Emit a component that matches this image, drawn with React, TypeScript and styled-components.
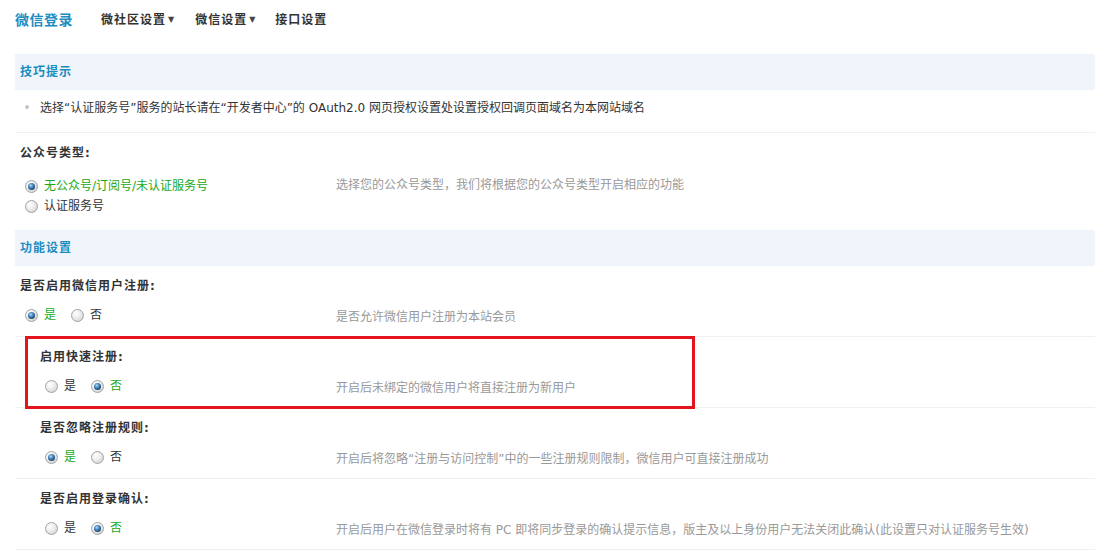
import styled, { createGlobalStyle } from "styled-components";

const GlobalStyle = createGlobalStyle`
  html, body {
    margin: 0;
    padding: 0;
    background: #fff;
  }
  body {
    font-family: "DejaVu Sans", "Noto Sans CJK SC", sans-serif;
    font-size: 12px;
    line-height: 16px;
    color: #333;
  }
`;

const Page = styled.div`
  width: 1095px;
  padding-left: 15px;
  box-sizing: border-box;
`;

const Header = styled.div`
  display: flex;
  align-items: center;
  height: 40px;
  margin-bottom: 14px;
`;

const PageTitle = styled.h3`
  margin: 0 28px 0 0;
  font-size: 14px;
  font-weight: 700;
  letter-spacing: 0.5px;
  line-height: 20px;
  color: #1b8dc1;
`;

const NavItem = styled.a<{ $gap: number }>`
  display: flex;
  align-items: center;
  margin-right: ${({ $gap }) => $gap}px;
  font-weight: 700;
  letter-spacing: 1px;
  color: #333;
  text-decoration: none;
`;

const Caret = styled.span`
  font-size: 8px;
  margin-left: 2px;
  letter-spacing: 0;
  color: #444;
`;

const SectionBar = styled.div`
  height: 36px;
  line-height: 36px;
  padding-left: 5px;
  background: #f0f5fb;
  color: #1a8cc0;
  font-weight: 700;
  letter-spacing: 1px;
`;

const TipRow = styled.div`
  display: flex;
  align-items: flex-start;
  box-sizing: border-box;
  height: 43px;
  padding: 10px 0 0 10px;
  border-bottom: 1px solid #eef1f4;
`;

const Bullet = styled.span`
  width: 4px;
  height: 4px;
  margin: 5px 11px 0 0;
  border-radius: 50%;
  background: #c4c4c4;
`;

const Block = styled.div<{ $last?: boolean }>`
  position: relative;
  border-bottom: ${({ $last }) => ($last ? "none" : "1px solid #eef1f4")};
`;

const TitleRow = styled.div<{ $indent: number }>`
  box-sizing: border-box;
  height: 34px;
  padding: 12px 0 0 ${({ $indent }) => 5 + $indent}px;
  font-weight: 700;
  letter-spacing: 1px;
  color: #333;
`;

const OptionRow = styled.div<{ $height: number }>`
  display: grid;
  grid-template-columns: 321px 1fr;
  height: ${({ $height }) => $height}px;
`;

const RadioGroup = styled.div<{ $indent: number; $stack?: boolean }>`
  display: flex;
  flex-direction: ${({ $stack }) => ($stack ? "column" : "row")};
  align-items: flex-start;
  padding: ${({ $stack }) => ($stack ? 9 : 7)}px 0 0
    ${({ $indent }) => 10 + $indent}px;
`;

const Option = styled.label<{ $checked?: boolean; $stack?: boolean }>`
  display: flex;
  align-items: center;
  gap: 6px;
  height: ${({ $stack }) => ($stack ? 20 : 16)}px;
  margin-right: 15px;
  color: ${({ $checked }) => ($checked ? "#1aa81a" : "#333")};
`;

const RadioMark = styled.span<{ $checked?: boolean }>`
  display: inline-flex;
  align-items: center;
  justify-content: center;
  width: 13px;
  height: 13px;
  box-sizing: border-box;
  border-radius: 50%;
  border: 1px solid #a3a3a3;
  background: radial-gradient(
    circle at 35% 30%,
    #ffffff 0,
    #ececec 45%,
    #c9c9c9 100%
  );

  &::after {
    content: "";
    display: ${({ $checked }) => ($checked ? "block" : "none")};
    width: 7px;
    height: 7px;
    border-radius: 50%;
    background: radial-gradient(
      circle at 40% 35%,
      #b4dcf7 0,
      #3d80ba 40%,
      #0f3657 85%
    );
  }
`;

const Desc = styled.div<{ $top: number }>`
  padding-top: ${({ $top }) => $top}px;
  color: #999;
`;

const Highlight = styled.div`
  position: absolute;
  top: -1px;
  left: 10px;
  width: 670px;
  height: 73px;
  box-sizing: border-box;
  border: 3px solid #e3141b;
  pointer-events: none;
`;

type Choice = { label: string; checked?: boolean };

interface SettingProps {
  title: string;
  choices: Choice[];
  desc: string;
  indent?: number;
  stack?: boolean;
  last?: boolean;
  highlight?: boolean;
}

const Setting = ({
  title,
  choices,
  desc,
  indent = 0,
  stack,
  last,
  highlight,
}: SettingProps) => (
  <Block $last={last}>
    <TitleRow $indent={indent}>{title}</TitleRow>
    <OptionRow $height={stack ? 63 : 36}>
      <RadioGroup $indent={indent} $stack={stack}>
        {choices.map((c) => (
          <Option key={c.label} $checked={c.checked} $stack={stack}>
            <RadioMark $checked={c.checked} />
            {c.label}
          </Option>
        ))}
      </RadioGroup>
      <Desc $top={stack ? 10 : 9}>{desc}</Desc>
    </OptionRow>
    {highlight && <Highlight />}
  </Block>
);

const yesNo = (yes: boolean): Choice[] => [
  { label: "是", checked: yes },
  { label: "否", checked: !yes },
];

export default function App() {
  return (
    <>
      <GlobalStyle />
      <Page>
        <Header>
          <PageTitle>微信登录</PageTitle>
          <NavItem $gap={21}>
            微社区设置<Caret>▼</Caret>
          </NavItem>
          <NavItem $gap={20}>
            微信设置<Caret>▼</Caret>
          </NavItem>
          <NavItem $gap={0}>接口设置</NavItem>
        </Header>

        <SectionBar>技巧提示</SectionBar>
        <TipRow>
          <Bullet />
          <span>
            选择“认证服务号”服务的站长请在“开发者中心”的 OAuth2.0
            网页授权设置处设置授权回调页面域名为本网站域名
          </span>
        </TipRow>

        <Setting
          title="公众号类型:"
          stack
          last
          choices={[
            { label: "无公众号/订阅号/未认证服务号", checked: true },
            { label: "认证服务号" },
          ]}
          desc="选择您的公众号类型，我们将根据您的公众号类型开启相应的功能"
        />

        <SectionBar>功能设置</SectionBar>
        <Setting
          title="是否启用微信用户注册:"
          choices={yesNo(true)}
          desc="是否允许微信用户注册为本站会员"
        />
        <Setting
          title="启用快速注册:"
          indent={20}
          highlight
          choices={yesNo(false)}
          desc="开启后未绑定的微信用户将直接注册为新用户"
        />
        <Setting
          title="是否忽略注册规则:"
          indent={20}
          choices={yesNo(true)}
          desc="开启后将忽略“注册与访问控制”中的一些注册规则限制，微信用户可直接注册成功"
        />
        <Setting
          title="是否启用登录确认:"
          indent={20}
          choices={yesNo(false)}
          desc="开启后用户在微信登录时将有 PC 即将同步登录的确认提示信息，版主及以上身份用户无法关闭此确认(此设置只对认证服务号生效)"
        />
      </Page>
    </>
  );
}
